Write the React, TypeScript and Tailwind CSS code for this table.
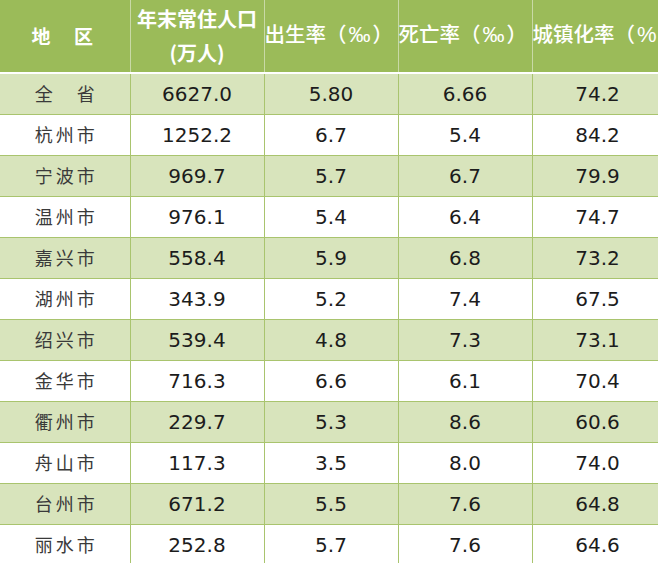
import React from "react"

const rows: [string, string, string, string, string][] = [
  ["全\u3000省", "6627.0", "5.80", "6.66", "74.2"],
  ["杭州市", "1252.2", "6.7", "5.4", "84.2"],
  ["宁波市", "969.7", "5.7", "6.7", "79.9"],
  ["温州市", "976.1", "5.4", "6.4", "74.7"],
  ["嘉兴市", "558.4", "5.9", "6.8", "73.2"],
  ["湖州市", "343.9", "5.2", "7.4", "67.5"],
  ["绍兴市", "539.4", "4.8", "7.3", "73.1"],
  ["金华市", "716.3", "6.6", "6.1", "70.4"],
  ["衢州市", "229.7", "5.3", "8.6", "60.6"],
  ["舟山市", "117.3", "3.5", "8.0", "74.0"],
  ["台州市", "671.2", "5.5", "7.6", "64.8"],
  ["丽水市", "252.8", "5.7", "7.6", "64.6"],
]

const cjk = "font-['Noto_Sans_CJK_SC',sans-serif]"
const num = "font-['DejaVu_Sans',sans-serif]"

// unit sign in the header is wider than the CJK font's glyph
function Unit({ sign }: { sign: string }) {
  return (
    <>
      （<span className="font-['Liberation_Sans',sans-serif] font-normal text-[22px] px-[2px]">{sign}</span>）
    </>
  )
}

export default function App() {
  return (
    <div className="w-[658px] h-[563px] overflow-hidden bg-white">
      <table className="border-collapse table-fixed w-[663px]">
        <colgroup>
          <col className="w-[130px]" />
          <col className="w-[134px]" />
          <col className="w-[134px]" />
          <col className="w-[134px]" />
          <col className="w-[131px]" />
        </colgroup>
        <thead>
          <tr className={`h-[73px] bg-[#9bbb59] text-white ${cjk} text-[20.5px]`}>
            <th className="border-r border-[#c9d9a6] border-b-2 border-b-white tracking-[5px] font-bold text-[19px]">地&nbsp;&nbsp;区</th>
            <th className="border-r border-[#c9d9a6] border-b-2 border-b-white leading-[34px] font-bold text-[20px]">
              <div>年末常住人口</div>
              <div>(万人)</div>
            </th>
            <th className="border-r border-[#c9d9a6] border-b-2 border-b-white whitespace-nowrap text-left font-medium pb-[3px]">
              出生率<Unit sign="‰" />
            </th>
            <th className="border-r border-[#c9d9a6] border-b-2 border-b-white whitespace-nowrap text-left font-medium pb-[3px]">
              死亡率<Unit sign="‰" />
            </th>
            <th className="border-b-2 border-b-white whitespace-nowrap text-left font-medium pb-[3px]">
              城镇化率<Unit sign="%" />
            </th>
          </tr>
        </thead>
        <tbody>
          {rows.map((r, i) => (
            <tr key={r[0]} className={`h-[41px] ${i % 2 === 0 ? "bg-[#d8e4bc]" : "bg-white"}`}>
              <td className={`border-r border-b border-[#a9c46e] text-center ${cjk} text-[18px] text-[#3a3a3a] tracking-[3px] pl-[3px]`}>
                {r[0]}
              </td>
              {r.slice(1).map((v, j) => (
                <td
                  key={j}
                  className={`border-r border-b border-[#a9c46e] text-center ${num} text-[20px] text-[#1c1c1c]`}
                >
                  {v}
                </td>
              ))}
            </tr>
          ))}
        </tbody>
      </table>
    </div>
  )
}
